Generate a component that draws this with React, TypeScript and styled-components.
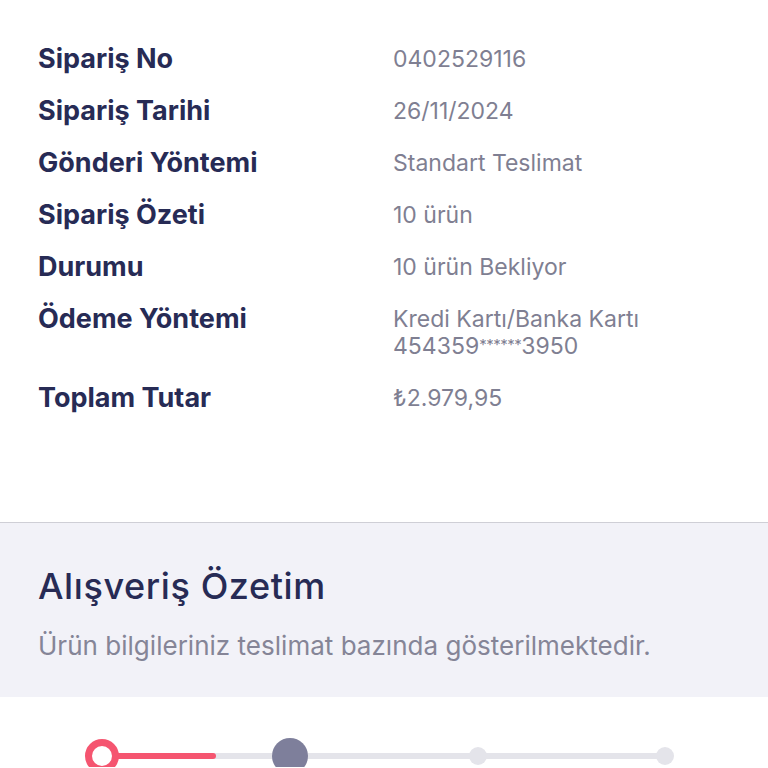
import React from 'react';
import styled, { createGlobalStyle } from 'styled-components';

interface DetailRow {
  label: string;
  value: string[];
}

const rows: DetailRow[] = [
  { label: 'Sipariş No', value: ['0402529116'] },
  { label: 'Sipariş Tarihi', value: ['26/11/2024'] },
  { label: 'Gönderi Yöntemi', value: ['Standart Teslimat'] },
  { label: 'Sipariş Özeti', value: ['10 ürün'] },
  { label: 'Durumu', value: ['10 ürün Bekliyor'] },
  { label: 'Ödeme Yöntemi', value: ['Kredi Kartı/Banka Kartı', '454359******3950'] },
  { label: 'Toplam Tutar', value: ['₺2.979,95'] },
];

const GlobalStyle = createGlobalStyle`
  body {
    margin: 0;
    background: #ffffff;
    font-family: Inter, "Liberation Sans", Arial, sans-serif;
    -webkit-font-smoothing: antialiased;
  }
`;

const Page = styled.div`
  width: 768px;
  height: 768px;
  overflow: hidden;
  display: flex;
  flex-direction: column;
`;

const Details = styled.section`
  box-sizing: border-box;
  height: 523px;
  padding: 46px 38px 0;
  border-bottom: 1px solid #cfcfd6;
  display: flex;
  flex-direction: column;
  gap: 26px;
`;

const Row = styled.div`
  display: grid;
  grid-template-columns: 355px 1fr;
  align-items: start;
`;

const Label = styled.div`
  font-size: 27px;
  font-weight: 700;
  line-height: 26px;
  color: #272b55;
`;

const Value = styled.div`
  font-size: 23px;
  font-weight: 400;
  line-height: 26px;
  color: #7f7f92;
`;

// masked card digits are drawn smaller and raised, like the reference
const Mask = styled.span`
  font-size: 15px;
  letter-spacing: -0.5px;
  vertical-align: 4px;
`;

const Summary = styled.section`
  background: #f2f2f8;
  padding: 43px 38px 36px;
  display: flex;
  flex-direction: column;
  gap: 25px;
`;

const Title = styled.h2`
  margin: 0;
  font-size: 36px;
  font-weight: 500;
  line-height: 40px;
  color: #272b55;
  letter-spacing: 0.6px;
`;

const Subtitle = styled.p`
  margin: 0;
  font-size: 26px;
  line-height: 30px;
  color: #858597;
  letter-spacing: 0.02px;
`;

const StepperWrap = styled.div`
  flex: 1;
  display: flex;
  align-items: flex-start;
`;

const Stepper = () => (
  <svg width="768" height="70" viewBox="0 0 768 70">
    <line x1="102" y1="59" x2="665" y2="59" stroke="#e4e4ea" strokeWidth="6" strokeLinecap="round" />
    <line x1="102" y1="59" x2="213" y2="59" stroke="#f55570" strokeWidth="6" strokeLinecap="round" />
    <circle cx="102" cy="59" r="13.5" fill="#ffffff" stroke="#f55570" strokeWidth="7" />
    <circle cx="290" cy="59" r="18" fill="#7e7f9b" />
    <circle cx="478" cy="59" r="9" fill="#e4e4ea" />
    <circle cx="665" cy="59" r="9" fill="#e4e4ea" />
  </svg>
);

const renderLine = (line: string) =>
  line.split(/(\*+)/).map((part, i) =>
    part.startsWith('*') ? <Mask key={i}>{part}</Mask> : <React.Fragment key={i}>{part}</React.Fragment>
  );

export default function App() {
  return (
    <Page>
      <GlobalStyle />
      <Details>
        {rows.map((row) => (
          <Row key={row.label}>
            <Label>{row.label}</Label>
            <Value>
              {row.value.map((line) => (
                <div key={line}>{renderLine(line)}</div>
              ))}
            </Value>
          </Row>
        ))}
      </Details>
      <Summary>
        <Title>Alışveriş Özetim</Title>
        <Subtitle>Ürün bilgileriniz teslimat bazında gösterilmektedir.</Subtitle>
      </Summary>
      <StepperWrap>
        <Stepper />
      </StepperWrap>
    </Page>
  );
}
